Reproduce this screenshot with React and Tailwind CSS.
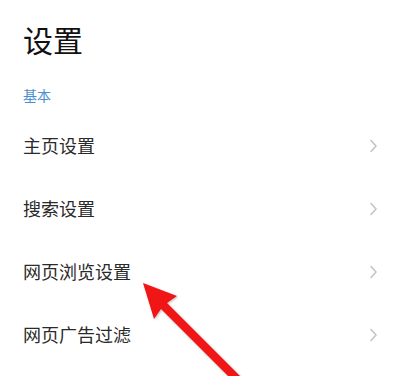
import React from "react";

const items = ["主页设置", "搜索设置", "网页浏览设置", "网页广告过滤"];

function Chevron() {
  return (
    <svg width="9" height="14" viewBox="0 0 9 14" fill="none" className="mr-[22px]">
      <path d="M2 1.5 L7 7 L2 12.5" stroke="#c4c4c4" strokeWidth="1.6" strokeLinecap="round" strokeLinejoin="round" />
    </svg>
  );
}

export default function App() {
  return (
    <div
      className="relative w-[400px] h-[376px] overflow-hidden bg-white"
      style={{ fontFamily: '"Noto Sans CJK SC", "Noto Sans", sans-serif' }}
    >
      <div className="pl-[23px] pt-[21px]">
        <h1 className="text-[30px] leading-[36px] text-[#111111]">设置</h1>
        <div className="mt-[28px] text-[14px] leading-[20px] text-[#4a8fd0]">基本</div>
      </div>

      <div className="mt-[9px]">
        {items.map((label) => (
          <div key={label} className="flex h-[63px] items-center justify-between pl-[23px]">
            <span className="text-[18px] text-[#2a2a2a]">{label}</span>
            <Chevron />
          </div>
        ))}
      </div>

      {/* red annotation arrow */}
      <svg className="absolute left-0 top-0" width="400" height="376" viewBox="0 0 400 376">
        <defs>
          <filter id="sh" x="-20%" y="-20%" width="140%" height="140%">
            <feDropShadow dx="1" dy="1" stdDeviation="1.2" floodColor="#000" floodOpacity="0.25" />
          </filter>
        </defs>
        <g filter="url(#sh)" fill="#f01616">
          <polygon points="143,283 177,296 167,303 332,468 326,474 161,309 154,319" />
        </g>
      </svg>
    </div>
  );
}
